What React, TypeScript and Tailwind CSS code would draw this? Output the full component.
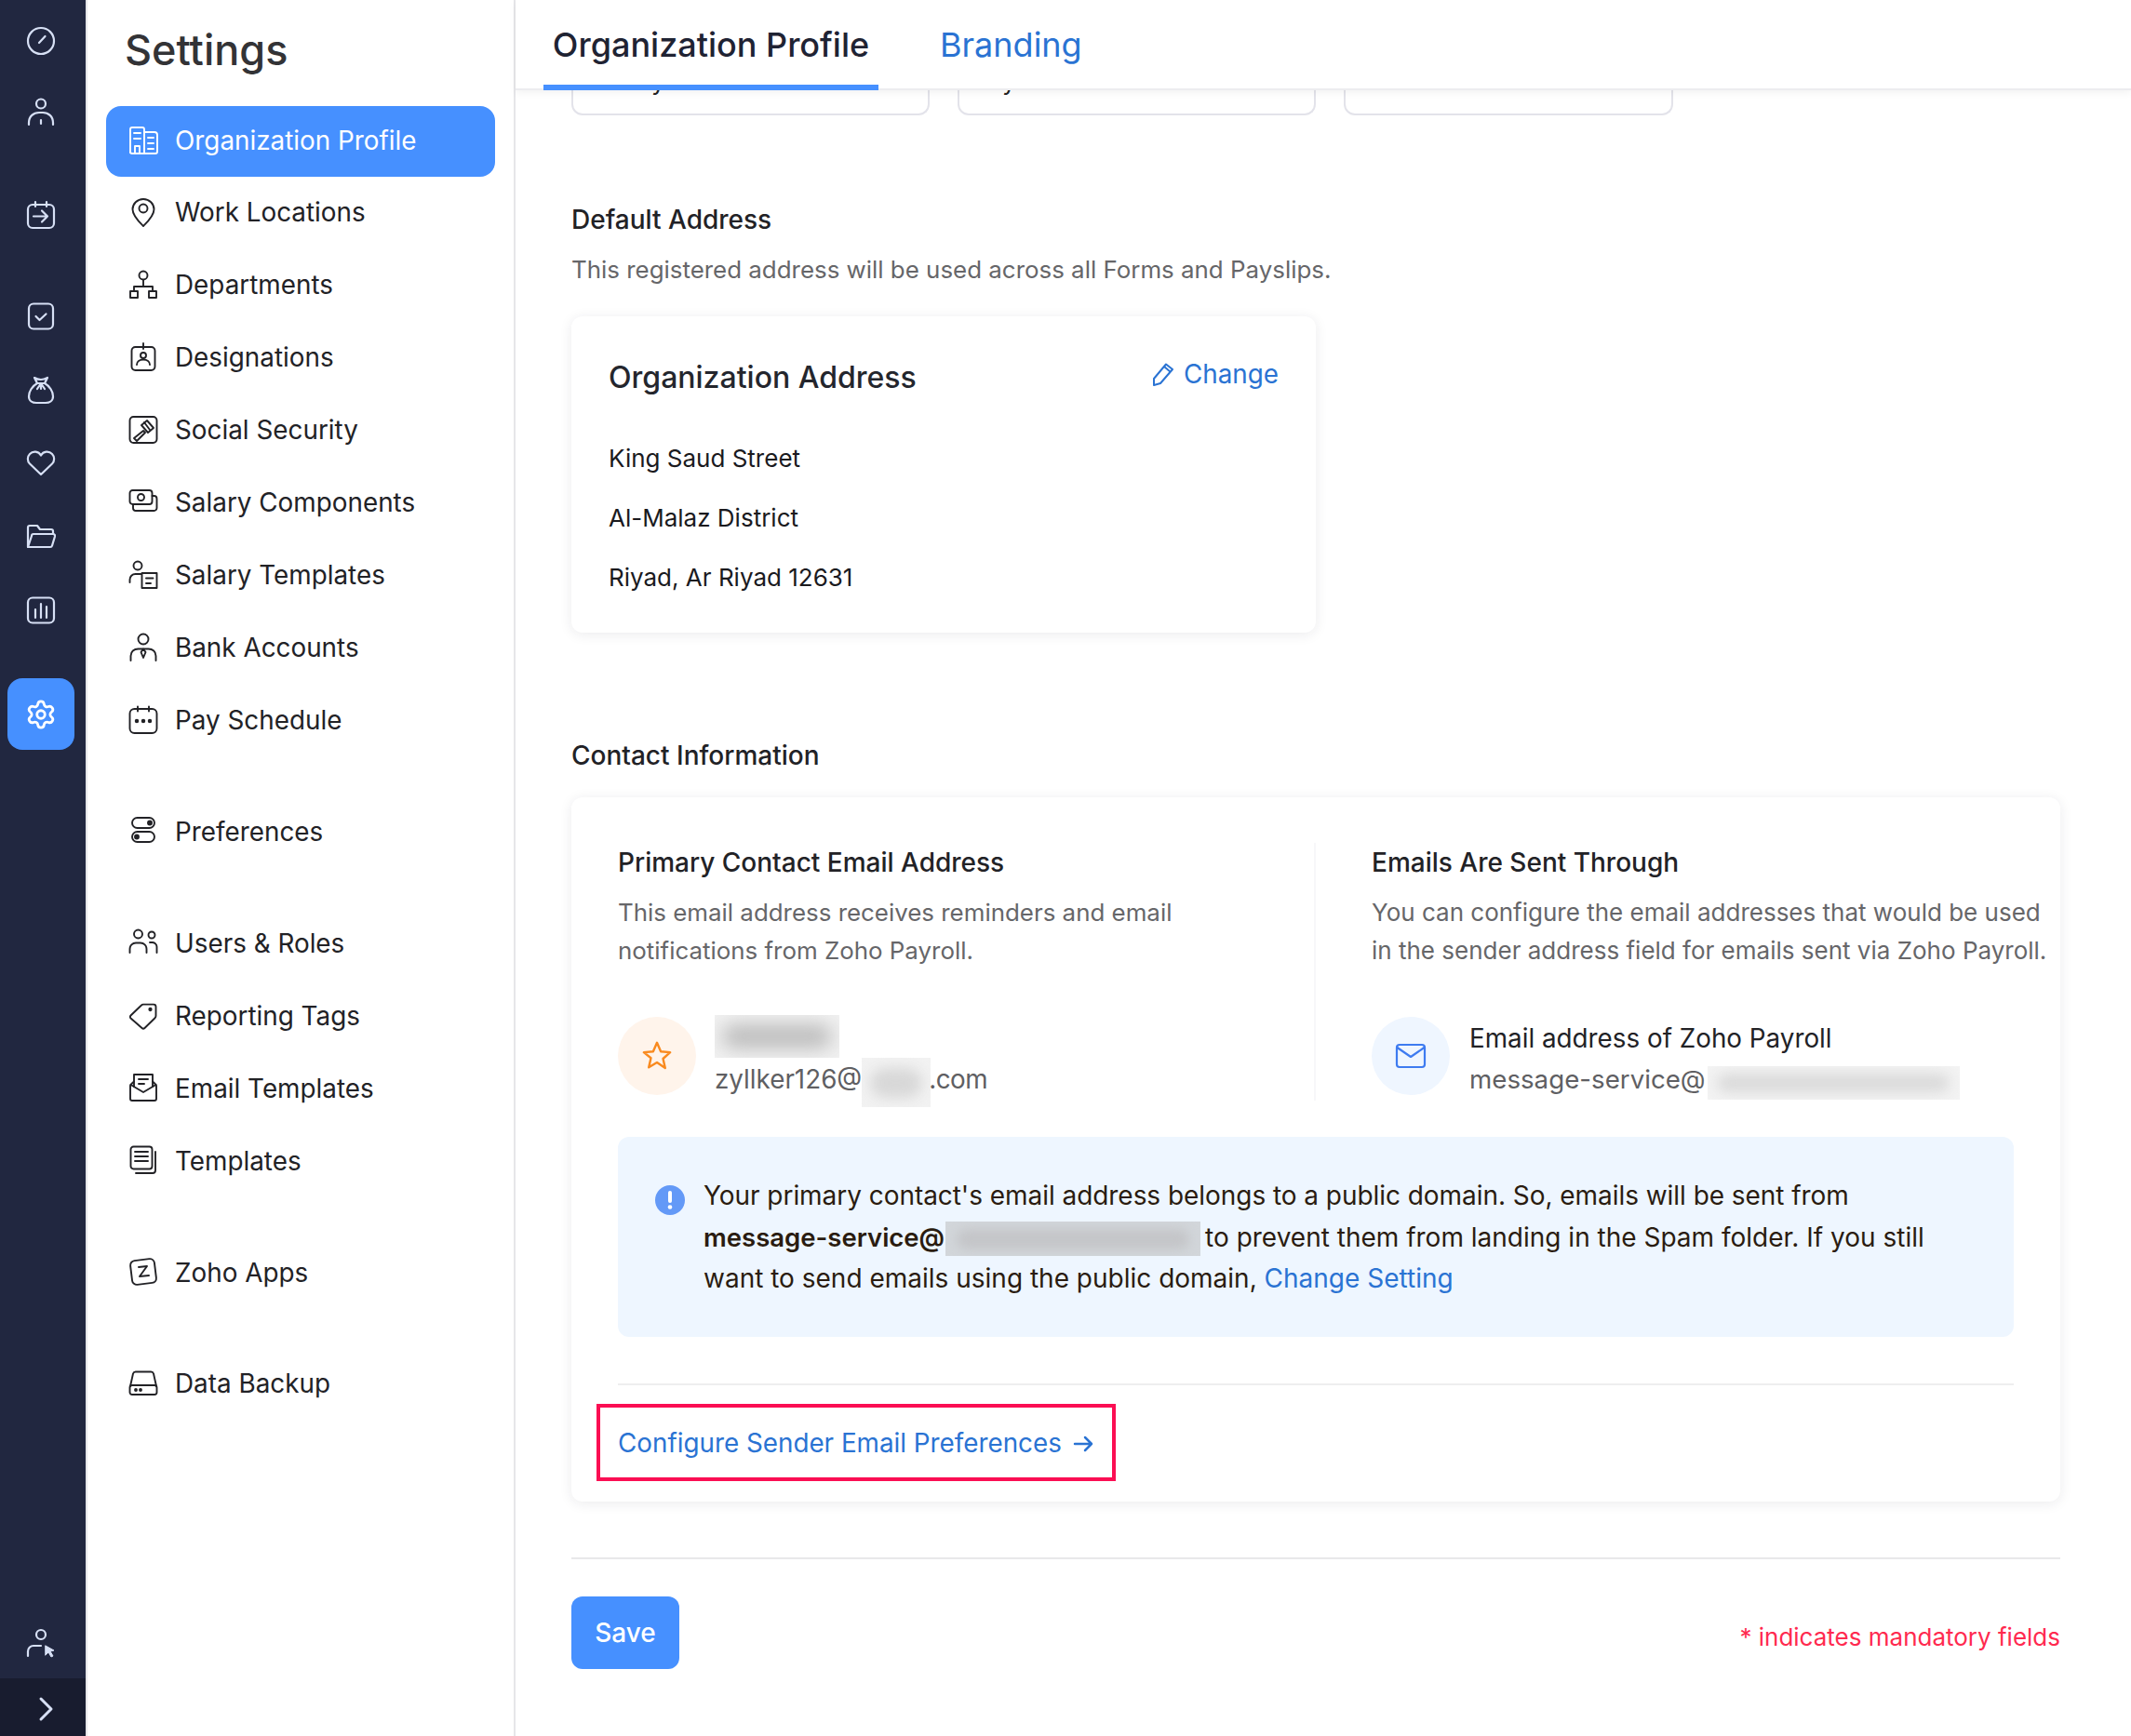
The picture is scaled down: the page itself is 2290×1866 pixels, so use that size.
import { ReactNode } from 'react'
import { Settings as Gear } from 'lucide-react'

function Ico({ children, size = 32, sw = 2 }: { children: ReactNode; size?: number; sw?: number }) {
  return (
    <svg width={size} height={size} viewBox="0 0 32 32" fill="none" stroke="currentColor" strokeWidth={sw} strokeLinecap="round" strokeLinejoin="round" className="shrink-0">
      {children}
    </svg>
  )
}

const sideIcons: Record<string, ReactNode> = {
  org: <><path d="M2 29V4a2 2 0 0 1 2-2h11a2 2 0 0 1 2 2v26" /><path d="M17 7h11a3 3 0 0 1 3 3v18a2 2 0 0 1-2 2H4a2 2 0 0 1-2-2" /><path d="M6 8h7M6 14h7M21 13h6M21 19h6M21 25h6" /><path d="M7 30v-8h5v8" /></>,
  pin: <><path d="M16 2C9.5 2 4.5 7 4.5 13c0 7 7 13.5 11.5 18 4.500-4.500 11.500-11 11.500-18C27.500 7 22.500 2 16 2z" /><circle cx="16" cy="12" r="4.500" /></>,
  dept: <><circle cx="16" cy="6" r="4.500" /><path d="M16 11v7M6 23v-5h20v5" /><rect x="2" y="23" width="8" height="7" /><rect x="22" y="23" width="8" height="7" /></>,
  badge: <><rect x="3.500" y="5" width="25" height="25" rx="4" /><path d="M16 1v6" /><circle cx="16" cy="14" r="3" /><path d="M9 24c0-3.500 3-5.500 7-5.500s7 2 7 5.500" /></>,
  gavel: <><rect x="1.500" y="2" width="29" height="28" rx="4" /><path d="M6 25l10-8 2 2-9 9z" /><path d="M14 11l6-5 7 8-6 5z" /><path d="M17 8l6 8" /></>,
  cash: <><rect x="1.500" y="3" width="24" height="15" rx="3" /><circle cx="13.500" cy="10.500" r="3.500" /><path d="M25.500 9h2a3 3 0 0 1 3 3v10a3 3 0 0 1-3 3H8a3 3 0 0 1-3-3v-4" /></>,
  tmpl: <><circle cx="10" cy="6" r="4.500" /><path d="M1.500 24v-3a6 6 0 0 1 6-6h6" /><rect x="14.500" y="14" width="16" height="16" /><path d="M19 19.500h7.500M19 25h5" /></>,
  bank: <><circle cx="16" cy="7" r="5.500" /><path d="M2.500 30v-5c0-4.500 3.500-7.500 8-7.500h11c4.500 0 8 3 8 7.500v5" /><path d="M16 17.500l-2.500 3.500 2.500 6 2.500-6z" /></>,
  sched: <><rect x="1.500" y="4" width="29" height="26" rx="5" /><path d="M10 1.500v5M22 1.500v5" /><circle cx="9" cy="17" r="1.300" fill="currentColor" /><circle cx="16" cy="17" r="1.300" fill="currentColor" /><circle cx="23" cy="17" r="1.300" fill="currentColor" /></>,
  prefs: <><rect x="4" y="2" width="24" height="11" rx="5.500" /><rect x="4" y="17" width="24" height="11" rx="5.500" /><circle cx="23" cy="7.500" r="2" fill="currentColor" /><circle cx="9" cy="22.500" r="2" fill="currentColor" /></>,
  users: <><circle cx="10.500" cy="7" r="4.500" /><circle cx="25" cy="8" r="3.500" /><path d="M1.500 27v-4a6.500 6.500 0 0 1 6.500-6.500h5a6.500 6.500 0 0 1 6.500 6.500v4" /><path d="M23 16h3a5 5 0 0 1 4.500 5v6" /></>,
  tag: <><path d="M2.500 16.500L14 5.500a3 3 0 0 1 2-.9h11a2.500 2.500 0 0 1 2.500 2.500v10a3 3 0 0 1-1 2.200L17.500 30a2.200 2.200 0 0 1-3 0L2.500 19.500a2.100 2.100 0 0 1 0-3z" /><circle cx="23.500" cy="10" r="1.200" fill="currentColor" /></>,
  mail: <><path d="M6 9.500l-3.200 3a2 2 0 0 0-.8 1.500v14a2 2 0 0 0 2 2h24a2 2 0 0 0 2-2V14a2 2 0 0 0-.8-1.500l-3.200-3" /><path d="M2.500 13L16 21l13.500-8" /><path d="M6 15V2h20v13" /><path d="M11 7h10M11 12h6" /></>,
  docs: <><rect x="2.500" y="1.500" width="23" height="24" rx="3" /><path d="M7 7h14M7 12h14M7 17h14" /><path d="M29 7v20a3 3 0 0 1-3 3H8" /></>,
  zoho: <><rect x="3" y="3" width="26" height="26" rx="5" transform="rotate(-7 16 16)" /><path d="M11 11l9-1-8 11 10-1" /></>,
  disk: <><path d="M2 19L5 5.500A3 3 0 0 1 8 3.500h16a3 3 0 0 1 3 2L30 19" /><rect x="1.500" y="18" width="29" height="10" rx="2.500" /><circle cx="8" cy="23" r="1" fill="currentColor" /><circle cx="13" cy="23" r="1" fill="currentColor" /></>,
}

const sideGroups = [
  [
    ['org', 'Organization Profile'],
    ['pin', 'Work Locations'],
    ['dept', 'Departments'],
    ['badge', 'Designations'],
    ['gavel', 'Social Security'],
    ['cash', 'Salary Components'],
    ['tmpl', 'Salary Templates'],
    ['bank', 'Bank Accounts'],
    ['sched', 'Pay Schedule'],
  ],
  [['prefs', 'Preferences']],
  [
    ['users', 'Users & Roles'],
    ['tag', 'Reporting Tags'],
    ['mail', 'Email Templates'],
    ['docs', 'Templates'],
  ],
  [['zoho', 'Zoho Apps']],
  [['disk', 'Data Backup']],
]

function Rail() {
  return (
    <aside className="w-[92px] shrink-0 flex flex-col bg-[#212740] text-[#d7e0f5] pt-[6px]">
      <RailSlot><circle cx="16" cy="16" r="14" /><path d="M14 18l6.500-7" /></RailSlot>
      <RailSlot><circle cx="16" cy="7.500" r="5" /><path d="M3 30v-2c0-7 5-11 11-11h4c6 0 11 4 11 11v2" /><path d="M16 25v4" /></RailSlot>
      <RailSlot className="mt-[35px]"><rect x="2" y="5" width="28" height="25" rx="5" /><path d="M10 2v5M22 2v5" /><path d="M8 17.500h15M17 11.500l6 6-6 6" /></RailSlot>
      <RailSlot className="mt-[33px]"><rect x="3" y="2.500" width="26" height="27" rx="5" /><path d="M10.500 16l4 4 7-6.500" /></RailSlot>
      <RailSlot className="mt-[3px]"><path d="M9 3c3 2 4.500 2 7 2s4-.500 7-2l-3 6h-8z" /><path d="M12 9C6.500 12 3 18 3 23c0 5 4 7 8 7h10c4 0 8-2 8-7 0-5-3.500-11-9-14" /><path d="M16 9v6M12 15l4-6 4 6" /></RailSlot>
      <RailSlot className="mt-[3px]"><path d="M16 28L4 16.500a7.500 7.500 0 0 1 0-10.500 7.500 7.500 0 0 1 12 1.500A7.500 7.500 0 0 1 28 6a7.500 7.500 0 0 1 0 10.500z" /></RailSlot>
      <RailSlot className="mt-[3px]"><path d="M2 27V6a2 2 0 0 1 2-2h8l3 4h12a2 2 0 0 1 2 2v3" /><path d="M2 27l4-12a2 2 0 0 1 2-2h21a2 2 0 0 1 2 2.500l-3 10a2 2 0 0 1-2 1.500z" /></RailSlot>
      <RailSlot className="mt-[3px]"><rect x="2" y="2.500" width="28" height="27" rx="5" /><path d="M10 15v9M16 9v15M22 12v12" /></RailSlot>
      <div className="mt-[35px] ml-[8px] w-[72px] h-[77px] rounded-2xl bg-[#4690ff] text-white flex items-center justify-center">
        <Gear size={34} strokeWidth={2} />
      </div>
      <RailSlot className="mt-auto"><circle cx="16" cy="7" r="5" /><path d="M2 30v-5a6 6 0 0 1 6-6h8" /><path d="M21 19l9 5-4 1 3 5-2 1-3-5-3 3z" fill="currentColor" strokeWidth="1" /></RailSlot>
      <div className="w-full h-[62px] bg-[#181c2f] flex items-center justify-center">
        <svg width="24" height="30" viewBox="0 0 24 30" fill="none" stroke="currentColor" strokeWidth="3" strokeLinecap="round" strokeLinejoin="round" className="ml-[8px] mt-[4px]">
          <path d="M6 4l11 11-11 11" />
        </svg>
      </div>
    </aside>
  )
}

function RailSlot({ children, className = '' }: { children: ReactNode; className?: string }) {
  return (
    <div className={`ml-[8px] h-[76px] w-[72px] shrink-0 flex items-center justify-center ${className}`}>
      <Ico sw={2.200}>{children}</Ico>
    </div>
  )
}

function SideNav() {
  return (
    <nav className="w-[462px] shrink-0 bg-white border-x-2 border-[#e6e6e9]">
      <h1 className="pl-[40px] pt-[22px] h-[113px] text-[45px] leading-[64px] font-medium text-[#333336]">Settings</h1>
      {sideGroups.map((group, i) => (
        <div key={i} className={i > 0 ? 'mt-[43.800px]' : ''}>
          {group.map(([icon, label]) => {
            const active = label === 'Organization Profile'
            return (
              <div
                key={label}
                className={`ml-[20px] w-[418px] h-[76px] pl-[24px] flex items-center gap-[18px] rounded-2xl text-[27.850px] ${active ? 'mt-px mb-px bg-[#4690ff] text-white' : 'mb-[2px] text-[#222226]'}`}
              >
                <span className="-mt-[3px] flex"><Ico sw={1.900}>{sideIcons[icon]}</Ico></span>
                <span className="whitespace-nowrap">{label}</span>
              </div>
            )
          })}
        </div>
      ))}
    </nav>
  )
}

function Blur({ box, spot }: { box: string; spot: string }) {
  return (
    <span className={`inline-flex shrink-0 items-center justify-center overflow-hidden ${box}`}>
      <span className={`block rounded-full ${spot}`} />
    </span>
  )
}

export default function App() {
  return (
    <div className="flex w-[2290px] h-[1866px] overflow-hidden bg-white font-[Inter,sans-serif]">
      <Rail />
      <SideNav />
      <main className="flex-1 min-w-0 flex flex-col">
        <header className="relative z-10 h-[97px] shrink-0 bg-white border-b-2 border-[#ececef] shadow-[0_3px_8px_rgba(0,0,0,0.05)] pl-[30px] flex gap-[66px]">
          <div className="w-[360px] h-[97px] border-b-[6px] border-[#4690ff] text-center text-[36px] leading-[96px] font-medium text-[#1f2333] whitespace-nowrap">Organization Profile</div>
          <div className="text-[36px] leading-[96px] text-[#2a73d3] whitespace-nowrap">Branding</div>
        </header>

        <div className="pl-[60px] pr-[76px]">
          <div className="flex gap-[30px]">
            <div className="w-[385px] h-[27px] border-x-2 border-b-2 border-[#e3e3ea] rounded-b-xl overflow-hidden"><div className="ml-[84px] -mt-[28px] text-[27px] leading-[36px] text-[#222]">y</div></div>
            <div className="w-[385px] h-[27px] border-x-2 border-b-2 border-[#e3e3ea] rounded-b-xl overflow-hidden"><div className="ml-[46px] -mt-[28px] text-[27px] leading-[36px] text-[#222]">y</div></div>
            <div className="w-[354px] h-[27px] border-x-2 border-b-2 border-[#e3e3ea] rounded-b-xl" />
          </div>

          <h2 className="mt-[92px] text-[28px] leading-[40px] font-medium text-[#222226]">Default Address</h2>
          <p className="mt-[14px] text-[25.900px] leading-[40px] text-[#666669]">This registered address will be used across all Forms and Payslips.</p>

          <section className="mt-[30px] w-[800px] h-[340px] rounded-xl bg-white shadow-[0_2px_14px_rgba(30,30,60,0.09)] pt-[44px] px-[40px]">
            <div className="flex justify-between">
              <h3 className="text-[32px] leading-[44px] font-medium text-[#24262d]">Organization Address</h3>
              <a className="mt-px flex items-center gap-[10px] h-[36px] text-[27.800px] text-[#2a73d3]">
                <svg width="24" height="26" viewBox="0 0 24 26" fill="none" stroke="currentColor" strokeWidth="2" strokeLinejoin="round" className="-mt-[3px]">
                  <path d="M2 18L15 2.500 22 8 9 23l-7 2z" /><path d="M13 5l7 6" />
                </svg>
                Change
              </a>
            </div>
            <div className="mt-[45px] flex flex-col gap-[24px] text-[26px] leading-[40px] text-[#1a1a1e]">
              <div>King Saud Street</div>
              <div>Al-Malaz District</div>
              <div>Riyad, Ar Riyad 12631</div>
            </div>
          </section>

          <h2 className="mt-[112px] text-[28px] leading-[40px] font-medium text-[#222226]">Contact Information</h2>

          <section className="mt-[25px] h-[757px] rounded-xl bg-white shadow-[0_2px_14px_rgba(30,30,60,0.09)] pt-[50px]">
            <div className="grid grid-cols-[798px_1fr] h-[272px]">
              <div className="pl-[50px]">
                <h3 className="text-[28px] leading-[40px] font-medium text-[#222226]">Primary Contact Email Address</h3>
                <p className="mt-[13px] text-[25.900px] leading-[41px] text-[#666669] whitespace-nowrap">
                  This email address receives reminders and email<br />notifications from Zoho Payroll.
                </p>
                <div className="mt-[51px] flex gap-[20px]">
                  <div className="w-[84px] h-[84px] rounded-full bg-[#fff4eb] flex items-center justify-center text-[#f98a1f]">
                    <svg width="34" height="34" viewBox="0 0 24 24" fill="none" stroke="currentColor" strokeWidth="1.700" strokeLinejoin="round">
                      <path d="M12 2l2.900 6.600 7.100.7-5.400 4.800 1.600 7.100L12 17l-6.200 3.700 1.600-7.100L2 9.300l7.100-.7z" />
                    </svg>
                  </div>
                  <div className="h-[84px]">
                    <Blur box="-mt-[2px] h-[46px] w-[134px] flex bg-[#f1f1f1]" spot="w-[118px] h-[26px] bg-[#bdbdbd] blur-[10px]" />
                    <div className="flex h-[53px] text-[27.800px] text-[#5f5f63]">
                      <span className="self-center pb-[5px]">zyllker126@</span>
                      <Blur box="h-[53px] w-[74px] bg-[#f2f2f2]" spot="w-[56px] h-[32px] bg-[#d8d8d8] blur-[7px]" />
                      <span className="self-center pb-[5px] -ml-[2px] tracking-[-0.5px]">.com</span>
                    </div>
                  </div>
                </div>
              </div>
              <div className="border-l-2 border-[#f7f7f9] pl-[60px] -mt-px">
                <h3 className="text-[28px] leading-[40px] font-medium text-[#222226] mt-px">Emails Are Sent Through</h3>
                <p className="mt-[13px] text-[26px] leading-[41px] text-[#666669] whitespace-nowrap">
                  You can configure the email addresses that would be used<br />in the sender address field for emails sent via Zoho Payroll.
                </p>
                <div className="mt-[51px] flex gap-[21px]">
                  <div className="w-[84px] h-[84px] rounded-full bg-[#eff6ff] flex items-center justify-center text-[#3e7bf0]">
                    <svg width="34" height="28" viewBox="0 0 34 28" fill="none" stroke="currentColor" strokeWidth="2.200" strokeLinejoin="round" strokeLinecap="round">
                      <rect x="2" y="2" width="30" height="24" rx="3" /><path d="M2.500 5L17 15 31.500 5" />
                    </svg>
                  </div>
                  <div>
                    <div className="h-[46px] text-[27.800px] leading-[46px] text-[#222226]">Email address of Zoho Payroll</div>
                    <div className="flex items-center h-[44px] text-[27.700px] text-[#5f5f63]">
                      message-service@
                      <Blur box="ml-[2px] h-[36px] w-[271px] mt-[6px] bg-[#f3f3f3]" spot="w-[250px] h-[20px] bg-[#dadada] blur-[7px]" />
                    </div>
                  </div>
                </div>
              </div>
            </div>

            <div className="mt-[43px] mx-[50px] h-[215px] rounded-xl bg-[#eef6ff] pl-[40px] pt-[41px] flex gap-[20px]">
              <div className="mt-[11px] w-[32px] h-[32px] shrink-0 rounded-full bg-[#6399f7] flex items-center justify-center">
                <svg width="6" height="22" viewBox="0 0 6 22"><rect x="1" y="1" width="4" height="13" rx="2" fill="#fff" /><circle cx="3" cy="18.500" r="2.300" fill="#fff" /></svg>
              </div>
              <p className="text-[28px] leading-[44.500px] text-[#2a1c10] whitespace-nowrap">
                <span className="tracking-[-0.05px]">Your primary contact's email address belongs to a public domain. So, emails will be sent from</span><br />
                <b className="font-semibold text-[27.500px]">message-service@</b>
                <Blur box="ml-px mr-[5px] align-middle h-[37px] w-[274px] bg-[#d2d6da]" spot="w-[250px] h-[22px] bg-[#c4c5c8] blur-[6px]" />
                to prevent them from landing in the Spam folder. If you still<br />
                want to send emails using the public domain, <a className="text-[#2a73d3]">Change Setting</a>
              </p>
            </div>

            <div className="mt-[50px] mx-[50px] h-[2px] bg-[#eeeeef]" />
            <a className="mt-[20px] ml-[27px] w-[558px] h-[83px] border-4 border-[#fb0e53] pl-[19px] pt-[2px] flex items-center gap-[12px] text-[27.800px] text-[#2a73d3] whitespace-nowrap">
              Configure Sender Email Preferences
              <svg width="22" height="20" viewBox="0 0 22 20" fill="none" stroke="currentColor" strokeWidth="2.500" strokeLinecap="round" strokeLinejoin="round">
                <path d="M2 10h18M13 3l7 7-7 7" />
              </svg>
            </a>
          </section>

          <div className="mt-[60px] h-[2px] bg-[#e8e8ea]" />
          <div className="mt-[40px] flex items-center justify-between">
            <button className="w-[116px] h-[78px] rounded-xl bg-[#4690ff] text-white text-[28px] font-medium">Save</button>
            <span className="mt-[8px] text-[26px] text-[#ff2a4f] whitespace-nowrap">* indicates mandatory fields</span>
          </div>
        </div>
      </main>
    </div>
  )
}
